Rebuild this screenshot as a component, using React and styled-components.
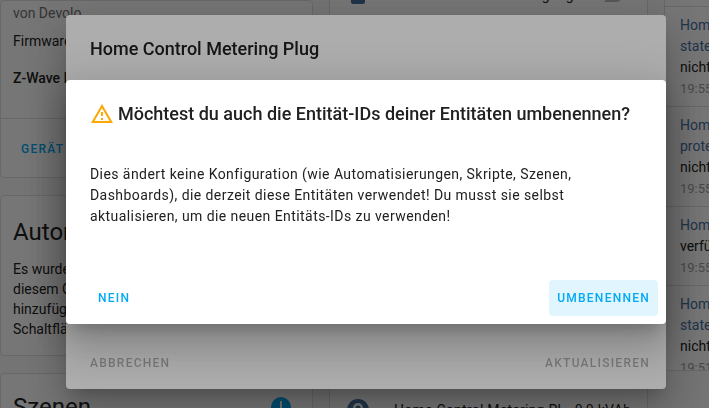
import React from 'react'
import styled, { createGlobalStyle } from 'styled-components'

const GlobalStyle = createGlobalStyle`
  *, *::before, *::after {
    box-sizing: border-box;
  }
  html, body {
    margin: 0;
    height: 100%;
    overflow: hidden;
    background: #fafafa;
    font-family: Roboto, "Noto Sans", sans-serif;
    color: #212121;
  }
`

const Page = styled.main`
  display: grid;
  grid-template-columns: 313px 319px 1fr;
  column-gap: 16px;
  height: 408px;
  overflow: hidden;
`

const Column = styled.div`
  display: flex;
  flex-direction: column;
  gap: 17px;
  margin-top: ${(p) => p.$shift || 0}px;
`

const Card = styled.section`
  background: #fff;
  border: 1px solid #e0e0e0;
  border-radius: 4px;
  overflow: hidden;
  flex-shrink: 0;
  height: ${(p) => p.$height}px;
`

const Info = styled.div`
  padding: 2px 12px 0;
  height: 118px;
  border-bottom: 1px solid #e0e0e0;
  font-size: 14px;
`

const InfoLine = styled.div`
  line-height: 20px;
  margin-bottom: ${(p) => p.$gap}px;
  color: ${(p) => (p.$muted ? '#727272' : '#212121')};
  font-weight: ${(p) => (p.$bold ? 500 : 400)};
`

const CardAction = styled.div`
  padding: 22px 20px;
  font-size: 12px;
  font-weight: 500;
  letter-spacing: 1.25px;
  color: #03a9f4;
  line-height: 16px;
`

const CardTitleRow = styled.div`
  display: flex;
  justify-content: space-between;
  align-items: center;
  padding: ${(p) => p.$top}px 21px 0 12px;
`

const CardTitle = styled.h2`
  margin: 0;
  font-size: 24px;
  font-weight: 400;
  line-height: 32px;
`

const CardText = styled.p`
  margin: 0;
  padding: 11px 12px;
  font-size: 14px;
  line-height: 20px;
`

const InfoDot = styled.span`
  position: relative;
  width: 20px;
  height: 20px;
  border-radius: 50%;
  background: #03a9f4;
  &::after {
    content: '';
    position: absolute;
    left: 9px;
    top: 4px;
    width: 2px;
    height: 7px;
    background: #fff;
  }
`

const ToggleRow = styled.div`
  display: flex;
  align-items: center;
  height: 40px;
  padding: 0 24px 0 21px;
  font-size: 14px;
`

const CheckBox = styled.span`
  width: 14px;
  height: 18px;
  border-radius: 2px;
  background: #44709f;
`

const ToggleLabel = styled.span`
  flex: 1;
  margin-right: 13px;
  text-align: right;
  letter-spacing: 0.25px;
`

const Toggle = styled.span`
  position: relative;
  width: 36px;
  height: 14px;
  border-radius: 7px;
  background: #bdbdbd;
  &::before {
    content: '';
    position: absolute;
    left: 0;
    top: -3px;
    width: 20px;
    height: 20px;
    border-radius: 50%;
    background: #fff;
  }
`

const Spacer = styled.div`
  height: ${(p) => p.$height}px;
`

const EntityRow = styled.div`
  display: flex;
  align-items: center;
  gap: 24px;
  padding: 0 16px;
  font-size: 14px;
  line-height: 20px;
  letter-spacing: 0.25px;
`

const EntityName = styled.span`
  flex: 1;
  min-width: 0;
  margin-right: -4px;
  white-space: nowrap;
`

const Logbook = styled.section`
  background: #fff;
  border: 1px solid #e0e0e0;
  border-radius: 4px;
  height: 391px;
  overflow: hidden;
  margin-top: -20px;
  width: 240px;
`

const LogHeader = styled.div`
  height: 26px;
  border-bottom: 1px solid #e0e0e0;
`

const LogEntry = styled.article`
  padding: 8px 15px 7px;
  font-size: 14px;
  line-height: 21px;
  border-bottom: 1px solid #e0e0e0;
  white-space: nowrap;
`

const LogLink = styled.div`
  color: #44709f;
`

const LogTime = styled.div`
  color: #9e9e9e;
  font-size: 13px;
`

const Scrim = styled.div`
  position: fixed;
  inset: 0;
  display: flex;
  align-items: center;
  justify-content: center;
  padding: 0 0 4px 23px;
  background: rgba(0, 0, 0, 0.32);
`

const Dialog = styled.div`
  display: flex;
  flex-direction: column;
  justify-content: space-between;
  width: 600px;
  height: ${(p) => p.$height}px;
  background: #fff;
  border-radius: 4px;
  box-shadow: 0 11px 15px -7px rgba(0, 0, 0, 0.2),
    0 24px 38px 3px rgba(0, 0, 0, 0.14), 0 9px 46px 8px rgba(0, 0, 0, 0.12);
`

const Heading = styled.h2`
  display: flex;
  align-items: center;
  gap: 4px;
  margin: 0;
  padding: 22px 24px 0;
  font-size: 18px;
  font-weight: 500;
  line-height: 24px;
  color: #212121;
`

const Body = styled.p`
  margin: 0;
  padding: 38px 24px 0;
  font-size: 14px;
  line-height: 21px;
  letter-spacing: 0.43px;
  color: #212121;
`

const Actions = styled.div`
  display: flex;
  justify-content: space-between;
  padding: 0 8px 8px ${(p) => p.$left}px;
`

const Button = styled.button`
  height: 36px;
  padding: 0 8px;
  border: 0;
  border-radius: 4px;
  background: ${(p) => (p.$focused ? '#e1f5fe' : 'transparent')};
  color: ${(p) => (p.$muted ? 'rgba(0, 0, 0, 0.3)' : '#03a9f4')};
  font-family: inherit;
  font-size: 12px;
  font-weight: 500;
  letter-spacing: 1.25px;
  text-transform: uppercase;
`

const AlertIcon = styled.svg`
  width: 24px;
  height: 24px;
  fill: #ffa600;
  flex-shrink: 0;
`

const EntityIcon = styled.svg`
  width: 24px;
  height: 24px;
  fill: #44709f;
  flex-shrink: 0;
`

const logEntries = [
  ['Home Control Metering Plug', 'state', 'nicht verfügbar', '19:55:01'],
  ['Home Control Metering Plug', 'protection', 'nicht verfügbar', '19:55:01'],
  ['Home Control Metering Plug', null, 'verfügbar', '19:55:01'],
  ['Home Control Metering Plug', 'state', 'nicht verfügbar', '19:51:12'],
]

export default function App() {
  return (
    <>
      <GlobalStyle />
      <Page>
        <Column>
          <Card $height={178}>
            <Info>
              <InfoLine $muted $gap={8}>von Devolo</InfoLine>
              <InfoLine $gap={17}>Firmware: 1.0</InfoLine>
              <InfoLine $bold $gap={0}>Z-Wave Info</InfoLine>
            </Info>
            <CardAction>GERÄT NEU KONFIGURIEREN</CardAction>
          </Card>
          <Card $height={161}>
            <CardTitleRow $top={20}>
              <CardTitle>Automatisierungen</CardTitle>
            </CardTitleRow>
            <CardText>
              Es wurden noch keine Automatisierungen mit
              <br />
              diesem Gerät erstellt. Du kannst welche
              <br />
              hinzufügen, indem du auf die
              <br />
              Schaltfläche oben klickst.
            </CardText>
          </Card>
          <Card $height={60}>
            <CardTitleRow $top={17}>
              <CardTitle>Szenen</CardTitle>
              <InfoDot />
            </CardTitleRow>
          </Card>
        </Column>
        <Column $shift={-26}>
          <Card $height={460}>
            <ToggleRow>
              <CheckBox />
              <ToggleLabel>Benachrichtigung</ToggleLabel>
              <Toggle />
            </ToggleRow>
            <Spacer $height={383} />
            <EntityRow>
              <EntityIcon viewBox="0 0 24 24">
                <circle cx="12" cy="12" r="11" />
                <circle cx="12" cy="10" r="5" fill="#fff" />
                <circle cx="12" cy="10" r="2.5" />
              </EntityIcon>
              <EntityName>Home Control Metering Pl</EntityName>
              <span>0,0 kVAh</span>
            </EntityRow>
          </Card>
        </Column>
        <Logbook>
          <LogHeader />
          {logEntries.map(([name, sub, state, time], i) => (
            <LogEntry key={i}>
              <LogLink>{name}</LogLink>
              {sub && <LogLink>{sub}</LogLink>}
              <div>{state}</div>
              <LogTime>{time}</LogTime>
            </LogEntry>
          ))}
        </Logbook>
      </Page>

      <Scrim>
        <Dialog $height={374}>
          <Heading>Home Control Metering Plug</Heading>
          <Actions $left={16}>
            <Button $muted>Abbrechen</Button>
            <Button $muted>Aktualisieren</Button>
          </Actions>
        </Dialog>
      </Scrim>

      <Scrim>
        <Dialog $height={244}>
          <div>
            <Heading>
              <AlertIcon viewBox="0 0 24 24">
                <path d="M12,2L1,21H23M12,6L19.53,19H4.47M11,10V14H13V10M11,16V18H13V16" />
              </AlertIcon>
              Möchtest du auch die Entität-IDs deiner Entitäten umbenennen?
            </Heading>
            <Body>
              Dies ändert keine Konfiguration (wie Automatisierungen, Skripte, Szenen,
              Dashboards), die derzeit diese Entitäten verwendet! Du musst sie selbst
              aktualisieren, um die neuen Entitäts-IDs zu verwenden!
            </Body>
          </div>
          <Actions $left={24}>
            <Button>Nein</Button>
            <Button $focused>Umbenennen</Button>
          </Actions>
        </Dialog>
      </Scrim>
    </>
  )
}
